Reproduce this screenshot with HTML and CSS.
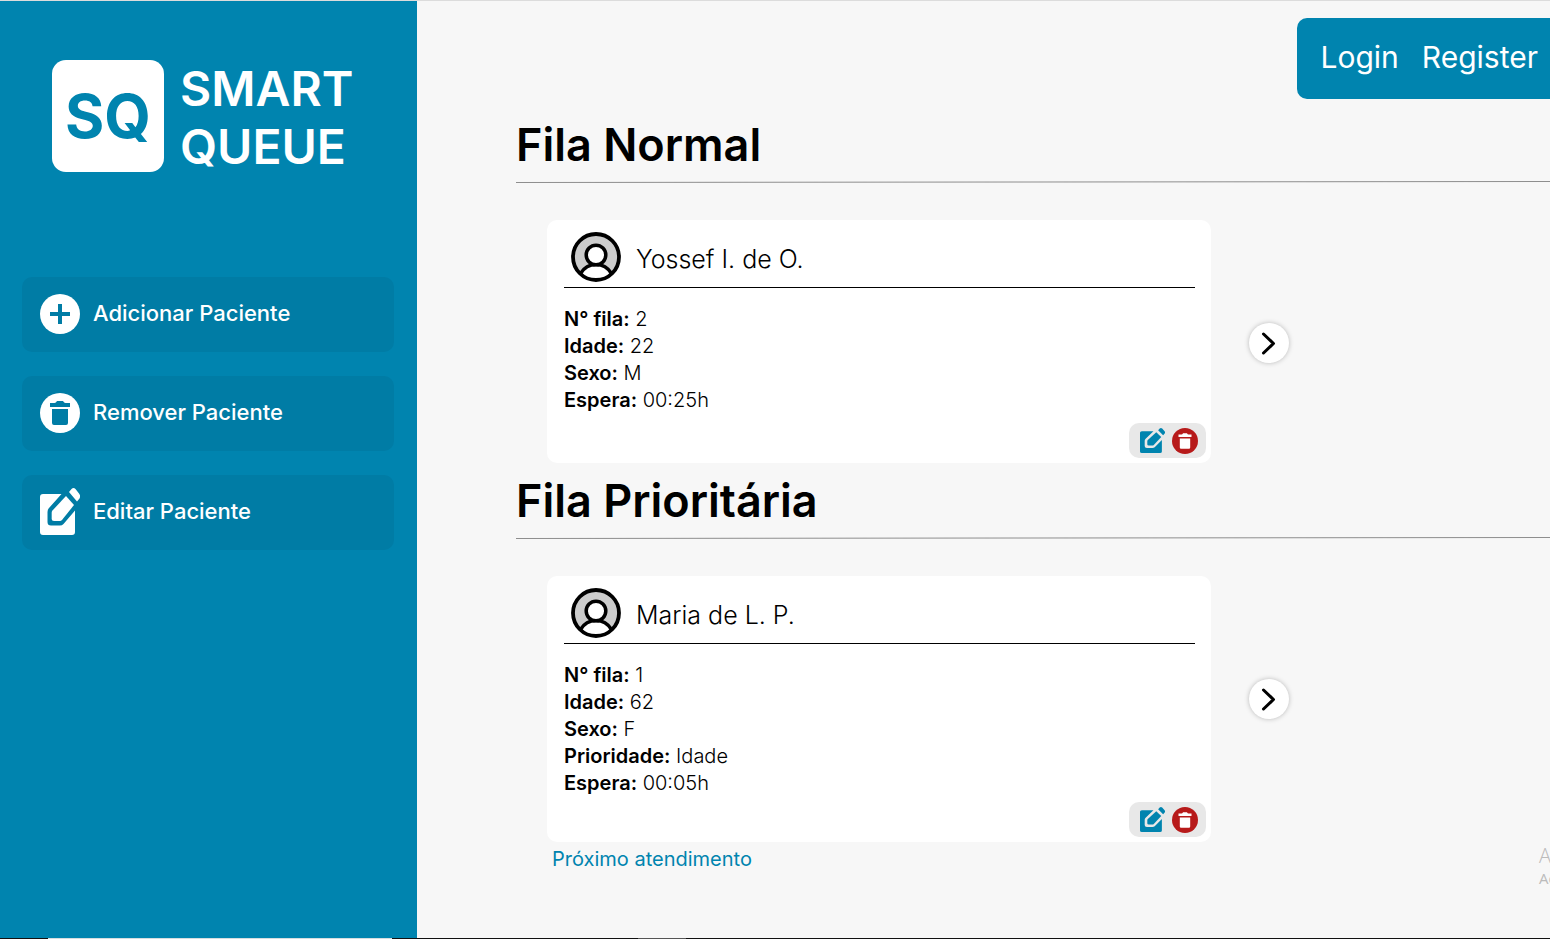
FILE: index.html
```html
<!DOCTYPE html>
<html lang="pt-BR">
<head>
<meta charset="utf-8">
<meta name="viewport" content="width=device-width, initial-scale=1">
<title>Smart Queue</title>
<link rel="stylesheet" href="styles.css">
</head>
<body>
<svg class="sprite" aria-hidden="true">
  <symbol id="plus" viewBox="0 0 40 40">
    <circle cx="20" cy="20" r="20" class="disc"/>
    <path class="mark" d="M18 10h4v8h8v4h-8v8h-4v-8h-8v-4h8z"/>
  </symbol>
  <symbol id="trash" viewBox="0 0 40 40">
    <circle cx="20" cy="20" r="20" class="disc"/>
    <path class="mark" d="M10 10h4.500q1.500 0 2.500-2h6q1 2 2.500 2H30v4H10zM12 16h16v14q0 2-2 2H14q-2 0-2-2z"/>
  </symbol>
  <symbol id="edit" viewBox="0 0 40 47" preserveAspectRatio="none">
    <path class="disc" d="M3 6H21.500L9 20Q7.500 21.500 7.500 24V34Q7.500 37.500 11 37.500H20Q22 37.500 23.500 36L35 22.500V44Q35 47 32 47H3Q0 47 0 44V9Q0 6 3 6Z"/>
    <path class="disc" d="M26 8L34 17L22 32Q21 33 20 33H14Q11.700 33 11.700 31V24.500Q11.700 23.500 12.500 22.500Z"/>
    <path class="disc" d="M29 4L31.500 1Q33.500-1 35.500 1L39 5.500Q41 8 39.500 10.500L37 13.500Z"/>
  </symbol>
  <symbol id="avatar" viewBox="0 0 50 50">
    <circle cx="25" cy="25" r="23" fill="#ccc"/>
    <path d="M9.500 41.500Q15 32.500 25 32.500T40.500 41.500Q34 48 25 48T9.500 41.500Z" fill="#fff"/>
    <path d="M9.500 41.500Q15 32.500 25 32.500T40.500 41.500" fill="none" stroke="#000" stroke-width="3.500"/>
    <circle cx="25" cy="23" r="9.800" fill="#fff" stroke="#000" stroke-width="3.500"/>
    <circle cx="25" cy="25" r="23" fill="none" stroke="#000" stroke-width="3.800"/>
  </symbol>
  <symbol id="next" viewBox="0 0 40 40">
    <path d="M14.500 11l10 9.500L14.500 30" fill="none" stroke="#000" stroke-width="3" stroke-linecap="round" stroke-linejoin="round"/>
  </symbol>
  <symbol id="rule" viewBox="0 0 1135 2" preserveAspectRatio="none">
    <path d="M0 1.500L1135 .500" stroke="#888" stroke-width="1"/>
  </symbol>
</svg>
<div class="page">
  <div class="layout">
    <aside class="sidebar">
      <div class="brand">
        <div class="brand-mark">SQ</div>
        <div class="brand-name">SMART<br>QUEUE</div>
      </div>
      <div class="menu">
        <button class="menu-item" type="button"><svg class="menu-icon"><use href="#plus"/></svg><span class="menu-label">Adicionar Paciente</span></button>
        <button class="menu-item" type="button"><svg class="menu-icon"><use href="#trash"/></svg><span class="menu-label">Remover Paciente</span></button>
        <button class="menu-item" type="button"><svg class="menu-icon menu-icon-tall"><use href="#edit"/></svg><span class="menu-label">Editar Paciente</span></button>
      </div>
    </aside>
    <main class="content">
      <nav class="account">
        <a href="#login">Login</a>
        <a href="#register">Register</a>
      </nav>
      <section class="queue">
        <h1 class="queue-title">Fila Normal</h1>
        <svg class="rule" aria-hidden="true"><use href="#rule"/></svg>
        <div class="queue-row">
          <article class="card">
            <header class="card-head"><svg class="avatar"><use href="#avatar"/></svg><h2 class="name">Yossef I. de O.</h2></header>
            <ul class="details">
              <li><strong>N° fila:</strong> 2</li>
              <li><strong>Idade:</strong> 22</li>
              <li><strong>Sexo:</strong> M</li>
              <li><strong>Espera:</strong> 00:25h</li>
            </ul>
            <div class="actions">
              <button class="action edit" type="button" aria-label="Editar"><svg><use href="#edit"/></svg></button>
              <button class="action remove" type="button" aria-label="Remover"><svg><use href="#trash"/></svg></button>
            </div>
          </article>
          <button class="next" type="button" aria-label="Próximo"><svg><use href="#next"/></svg></button>
        </div>
      </section>
      <section class="queue">
        <h1 class="queue-title">Fila Prioritária</h1>
        <svg class="rule" aria-hidden="true"><use href="#rule"/></svg>
        <div class="queue-row">
          <article class="card">
            <header class="card-head"><svg class="avatar"><use href="#avatar"/></svg><h2 class="name">Maria de L. P.</h2></header>
            <ul class="details">
              <li><strong>N° fila:</strong> 1</li>
              <li><strong>Idade:</strong> 62</li>
              <li><strong>Sexo:</strong> F</li>
              <li><strong>Prioridade:</strong> Idade</li>
              <li><strong>Espera:</strong> 00:05h</li>
            </ul>
            <div class="actions">
              <button class="action edit" type="button" aria-label="Editar"><svg><use href="#edit"/></svg></button>
              <button class="action remove" type="button" aria-label="Remover"><svg><use href="#trash"/></svg></button>
            </div>
          </article>
          <button class="next" type="button" aria-label="Próximo"><svg><use href="#next"/></svg></button>
        </div>
        <p class="upcoming">Próximo atendimento</p>
      </section>
    </main>
  </div>
  <div class="bottom-edge"><span class="edge-light"></span><span class="edge-mid"></span></div>
  <div class="watermark"><span class="watermark-title">A</span><span class="watermark-text">Ac</span></div>
</div>
</body>
</html>
```

FILE: styles.css
```css
* { box-sizing: border-box; }

body {
  margin: 0;
  font-family: Inter, "Liberation Sans", sans-serif;
  font-size: 20px;
  color: #000;
  background: #f7f7f7;
}

h1, h2, p, ul { margin: 0; padding: 0; }

button {
  border: 0;
  padding: 0;
  font: inherit;
  cursor: pointer;
}

svg { display: block; }

.sprite { position: absolute; width: 0; height: 0; }

.page {
  position: relative;
  display: flex;
  flex-direction: column;
  min-height: 100vh;
  border-top: 1px solid #dcdcdc;
  overflow: hidden;
}

.layout { display: flex; flex: 1; }

.sidebar {
  flex: 0 0 417px;
  padding: 59px 23px 24px 22px;
  background: #0084af;
  color: #fff;
}

.brand {
  display: flex;
  align-items: flex-start;
  gap: 16px;
  padding-left: 30px;
}

.brand-mark {
  display: flex;
  align-items: center;
  justify-content: center;
  width: 112px;
  height: 112px;
  border-radius: 14px;
  background: #fff;
  color: #0084af;
  font-size: 60px;
  font-weight: 700;
}

.brand-name {
  font-size: 48px;
  font-weight: 600;
  line-height: 58px;
}

.menu {
  display: flex;
  flex-direction: column;
  gap: 24px;
  margin-top: 101px;
}

.menu-item {
  display: flex;
  align-items: center;
  gap: 13px;
  height: 75px;
  padding: 0 18px 2px;
  border-radius: 10px;
  background: #007ca5;
  color: #fff;
  font-size: 22px;
  font-weight: 500;
  text-align: left;
}

.menu-label { padding-bottom: 2px; }

.menu-icon { width: 40px; height: 40px; fill: #fff; }
.menu-icon-tall { height: 47px; }
.mark { fill: var(--mark, #007ca5); }

.content {
  flex: 1;
  min-width: 0;
  display: flex;
  flex-direction: column;
  padding: 17px 0 0 99px;
}

.account {
  align-self: flex-end;
  display: flex;
  gap: 23px;
  padding: 21px 12px 24px 23px;
  border-radius: 10px 0 0 10px;
  background: #0084af;
  margin-bottom: 18px;
}

.account a {
  color: #fff;
  font-size: 30px;
  line-height: 36px;
  text-decoration: none;
}

.queue-title {
  font-size: 45px;
  font-weight: 600;
  line-height: 56px;
}

.rule { width: 100%; height: 2px; margin-top: 8px; }

.queue-row {
  display: flex;
  align-items: flex-start;
  gap: 38px;
  padding: 37px 0 0 31px;
}

.queue + .queue { margin-top: 10px; }

.card {
  display: flex;
  flex-direction: column;
  flex: 0 1 664px;
  min-height: 243px;
  padding: 12px 5px 5px 17px;
  border-radius: 10px;
  background: #fff;
}

.card-head {
  display: flex;
  align-items: center;
  gap: 15px;
  margin-right: 11px;
  padding: 0 7px 5px;
  border-bottom: 1px solid #000;
}

.avatar { width: 50px; height: 50px; }

.name {
  padding-top: 4px;
  font-size: 25px;
  font-weight: 300;
  line-height: 30px;
}

.details {
  margin: 18px 0 5px;
  list-style: none;
  font-weight: 300;
  line-height: 27px;
}

.details strong { font-weight: 600; }

.actions {
  display: flex;
  align-items: center;
  align-self: flex-end;
  gap: 7px;
  height: 35px;
  margin-top: auto;
  padding: 0 8px 0 11px;
  border-radius: 10px;
  background: #e8e8e8;
}

.action { background: none; }
.action svg { width: 26px; height: 26px; }
.edit svg { width: 25px; height: 25px; fill: #0084af; }
.remove svg { fill: #b71a1a; --mark: #fff; }

.next {
  width: 40px;
  height: 40px;
  margin-top: 103px;
  border-radius: 50%;
  background: #fff;
  box-shadow: 0 0 5px rgb(0 0 0 / 25%);
}

.next svg { width: 40px; height: 40px; }

.upcoming {
  padding: 5px 0 0 36px;
  color: #0084af;
  font-weight: 400;
  line-height: 24px;
}

.bottom-edge {
  display: flex;
  height: 1px;
  padding-left: 48px;
  background: #111;
}

.edge-light { width: 344px; background: #d5dde0; }
.edge-mid { width: 48px; margin-left: 246px; background: #555; }

.watermark {
  position: absolute;
  right: -8px;
  bottom: 51px;
  display: flex;
  flex-direction: column;
  width: 19px;
  color: #bbb;
  font-family: "Open Sans", sans-serif;
}

.watermark-title { font-size: 20px; font-weight: 300; line-height: 24px; }
.watermark-text { font-size: 15px; line-height: 20px; }
```
